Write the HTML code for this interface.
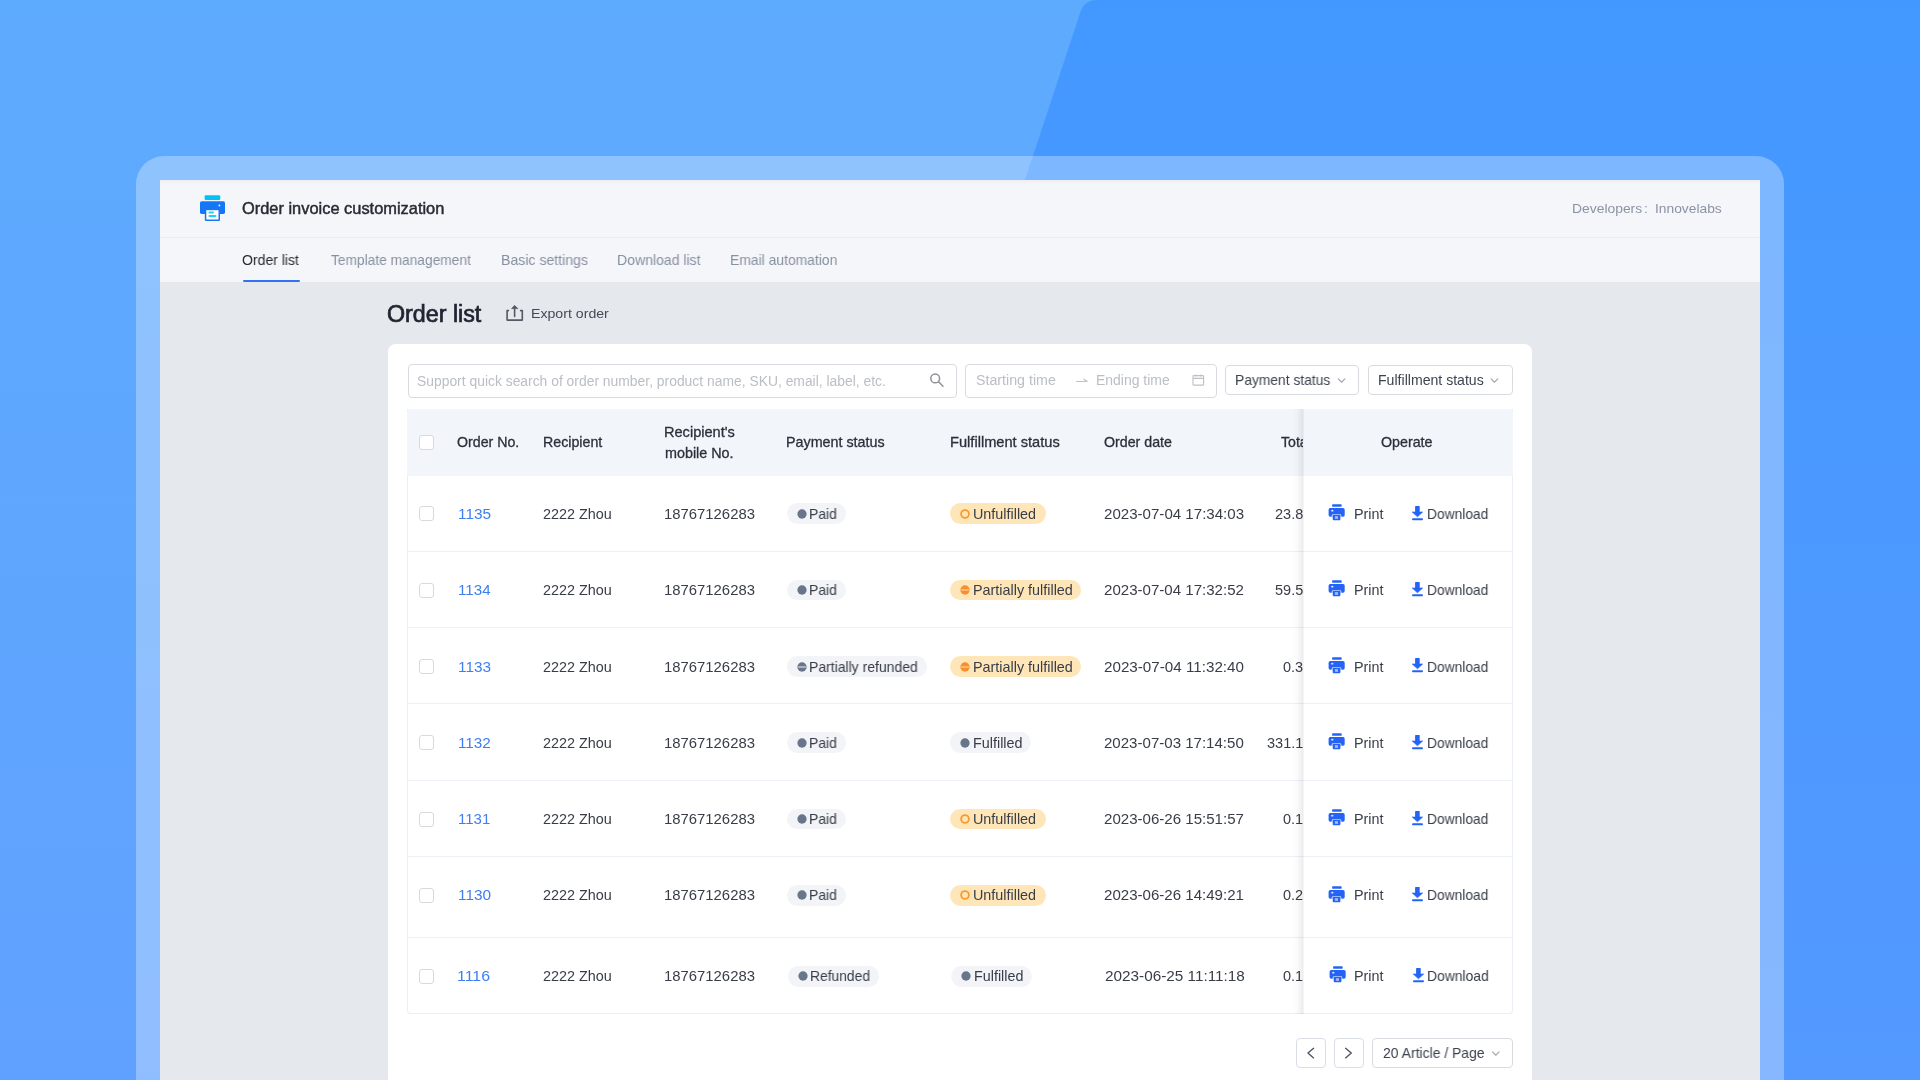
<!DOCTYPE html>
<html><head><meta charset="utf-8"><title>Order list</title>
<style>
html,body{margin:0;padding:0;width:1920px;height:1080px;overflow:hidden;background:#5DABFE;}
body{position:relative;font-family:"Liberation Sans",sans-serif;}
.r{position:absolute;}
.t{position:absolute;white-space:nowrap;will-change:transform;}
</style></head><body>
<svg class="r" style="left:0;top:0" width="1920" height="1080" viewBox="0 0 1920 1080">
<defs>
<linearGradient id="gl" x1="0" y1="0" x2="0" y2="1"><stop offset="0" stop-color="#5DABFE"/><stop offset="1" stop-color="#60A1FF"/></linearGradient>
<linearGradient id="gr" x1="0" y1="0" x2="0" y2="1"><stop offset="0" stop-color="#4398FF"/><stop offset="1" stop-color="#5399FF"/></linearGradient>
</defs>
<rect width="1920" height="1080" fill="url(#gl)"/>
<path d="M728,1080 L1080.4,12 Q1084.4,0 1097,0 L1920,0 L1920,1080 Z" fill="url(#gr)"/>
</svg>
<div class="r" style="left:136.00px;top:156.00px;width:1648.00px;height:1000.00px;border-radius:28px;background:rgba(255,255,255,0.3);"></div>
<div class="r" style="left:160.00px;top:180.00px;width:1600.00px;height:900.00px;background:#E5E8ED;"></div>
<div class="r" style="left:160.00px;top:180.00px;width:1600.00px;height:102.00px;background:#F5F6FA;"></div>
<div class="r" style="left:160.00px;top:237.00px;width:1600.00px;height:1.00px;background:#EAECF1;"></div>
<div class="r" style="left:160.00px;top:180.00px;width:1600.00px;height:4.00px;background:linear-gradient(to bottom, rgba(0,0,0,0.035), rgba(0,0,0,0));"></div>
<svg class="r" style="left:198px;top:193px" width="30" height="30" viewBox="198 193 30 30">
<rect x="204.6" y="195.2" width="15.7" height="4.8" rx="1.2" fill="#00C2F6"/>
<rect x="200" y="201.2" width="25" height="12.7" rx="1.6" fill="#1677F6"/>
<rect x="204.8" y="209.5" width="15.2" height="11.4" rx="1.2" fill="#1677F6"/>
<rect x="206.3" y="210.2" width="12.2" height="9.3" fill="#FFFFFF"/>
<rect x="208.5" y="211.6" width="5.5" height="1.9" rx="0.95" fill="#22CFF2"/>
<rect x="208.5" y="214.9" width="7.9" height="2.1" rx="1" fill="#22CFF2"/>
<circle cx="219.4" cy="205.4" r="0.9" fill="#FFFFFF"/>
</svg>
<div class="t" id="t0" style="left:241.81px;top:200px;font-size:16.20px;line-height:16.20px;color:#272B34;transform:scaleX(1.0131);transform-origin:0 0;-webkit-text-stroke:0.45px #272B34;">Order invoice customization</div>
<div class="t" id="t1" style="left:1572.48px;top:202px;font-size:13.60px;line-height:13.60px;color:#8A93A5;transform:scaleX(1.0203);transform-origin:0 0;">Developers</div>
<div class="t" id="t2" style="left:1644.10px;top:202px;font-size:13.60px;line-height:13.60px;color:#8A93A5;">:</div>
<div class="t" id="t3" style="left:1655.26px;top:202px;font-size:13.60px;line-height:13.60px;color:#8A93A5;transform:scaleX(1.0149);transform-origin:0 0;">Innovelabs</div>
<div class="t" id="t4" style="left:242.37px;top:253px;font-size:14.20px;line-height:14.20px;color:#272B34;transform:scaleX(0.9887);transform-origin:0 0;">Order list</div>
<div class="t" id="t5" style="left:331.11px;top:253px;font-size:14.20px;line-height:14.20px;color:#8790A1;transform:scaleX(0.9688);transform-origin:0 0;">Template management</div>
<div class="t" id="t6" style="left:500.86px;top:253px;font-size:14.20px;line-height:14.20px;color:#8790A1;transform:scaleX(0.9932);transform-origin:0 0;">Basic settings</div>
<div class="t" id="t7" style="left:616.91px;top:253px;font-size:14.20px;line-height:14.20px;color:#8790A1;transform:scaleX(0.9902);transform-origin:0 0;">Download list</div>
<div class="t" id="t8" style="left:729.88px;top:253px;font-size:14.20px;line-height:14.20px;color:#8790A1;transform:scaleX(0.9793);transform-origin:0 0;">Email automation</div>
<div class="r" style="left:243.00px;top:279.50px;width:57.00px;height:2.60px;background:#3470F4;border-radius:1px;"></div>
<div class="t" id="t9" style="left:387.34px;top:303px;font-size:23.00px;line-height:23.00px;color:#1F2430;transform:scaleX(1.0108);transform-origin:0 0;-webkit-text-stroke:0.7px #1F2430;">Order list</div>
<svg class="r" style="left:500px;top:300px" width="30" height="26" viewBox="500 300 30 26">
<path d="M508.4,310.6 H507.1 V320.1 H522.3 V310.6 H520.6" fill="none" stroke="#535A66" stroke-width="1.6" stroke-linejoin="round" stroke-linecap="round"/>
<path d="M514.6,316.4 V306.8" fill="none" stroke="#535A66" stroke-width="1.6" stroke-linecap="round"/>
<path d="M511.6,308.6 L514.6,305.4 L517.8,308.6 Z" fill="#535A66" stroke="#535A66" stroke-width="0.8" stroke-linejoin="round"/>
</svg>
<div class="t" id="t10" style="left:531.12px;top:307px;font-size:13.70px;line-height:13.70px;color:#434A56;transform:scaleX(1.0333);transform-origin:0 0;">Export order</div>
<div class="r" style="left:388.00px;top:344.00px;width:1143.70px;height:800.00px;background:#FFFFFF;border-radius:8px;"></div>
<div class="r" style="left:407.50px;top:363.50px;width:549.00px;height:34.00px;border:1px solid #D9DBE0;border-radius:4px;box-sizing:border-box;"></div>
<div class="t" id="t11" style="left:417.15px;top:375px;font-size:13.80px;line-height:13.80px;color:#BABEC5;transform:scaleX(1.0056);transform-origin:0 0;">Support quick search of order number, product name, SKU, email, label, etc.</div>
<svg class="r" style="left:925px;top:368px" width="25" height="24" viewBox="925 368 25 24">
<circle cx="935.2" cy="378.4" r="4.4" fill="none" stroke="#8E9196" stroke-width="1.5"/>
<path d="M938.6,381.8 L943,386.2" stroke="#8E9196" stroke-width="1.5" stroke-linecap="round"/>
</svg>
<div class="r" style="left:965.00px;top:363.50px;width:251.50px;height:34.00px;border:1px solid #D9DBE0;border-radius:4px;box-sizing:border-box;"></div>
<div class="t" id="t12" style="left:975.56px;top:374px;font-size:13.80px;line-height:13.80px;color:#BABEC5;transform:scaleX(1.0310);transform-origin:0 0;">Starting time</div>
<div class="t" id="t13" style="left:1096.26px;top:374px;font-size:13.80px;line-height:13.80px;color:#BABEC5;transform:scaleX(1.0116);transform-origin:0 0;">Ending time</div>
<svg class="r" style="left:1070px;top:368px" width="140" height="24" viewBox="1070 368 140 24">
<path d="M1076.6,381.5 H1087.2 L1083.8,379.2" fill="none" stroke="#BCC0C7" stroke-width="1.1" stroke-linecap="round" stroke-linejoin="round"/>
<rect x="1193" y="375.6" width="10.6" height="9.5" rx="0.6" fill="none" stroke="#BCC0C7" stroke-width="1.1"/>
<path d="M1193,378.4 H1203.6 M1195.8,374.6 V376.4 M1200.8,374.6 V376.4" stroke="#BCC0C7" stroke-width="1.1"/>
</svg>
<div class="r" style="left:1224.50px;top:365.30px;width:134.20px;height:30.00px;border:1px solid #D9DBE0;border-radius:4px;box-sizing:border-box;"></div>
<div class="t" id="t14" style="left:1235.27px;top:373px;font-size:14.10px;line-height:14.10px;color:#3D4450;transform:scaleX(0.9812);transform-origin:0 0;">Payment status</div>
<div class="r" style="left:1367.50px;top:365.30px;width:145.00px;height:30.00px;border:1px solid #D9DBE0;border-radius:4px;box-sizing:border-box;"></div>
<div class="t" id="t15" style="left:1378.16px;top:373px;font-size:14.10px;line-height:14.10px;color:#3D4450;transform:scaleX(0.9997);transform-origin:0 0;">Fulfillment status</div>
<svg class="r" style="left:1330px;top:370px" width="180" height="20" viewBox="1330 370 180 20">
<path d="M1338.3,378.9 L1341.6,382.2 L1344.9,378.9" fill="none" stroke="#A6AAB2" stroke-width="1.25" stroke-linecap="round" stroke-linejoin="round"/>
<path d="M1491.1,378.9 L1494.4,382.2 L1497.7,378.9" fill="none" stroke="#A6AAB2" stroke-width="1.25" stroke-linecap="round" stroke-linejoin="round"/>
</svg>
<div class="r" style="left:407.00px;top:408.70px;width:1106.00px;height:605.10px;border:1px solid #EBEEF5;border-top:none;border-radius:0 0 4px 4px;box-sizing:border-box;"></div>
<div class="r" style="left:407.00px;top:408.70px;width:1106.00px;height:67.00px;background:#F2F5FA;border-radius:4px 4px 0 0;"></div>
<div class="r" style="left:419.00px;top:434.70px;width:15.00px;height:15.00px;border:1px solid #D6D9DF;border-radius:3px;box-sizing:border-box;background:#fff;"></div>
<div class="t" id="t16" style="left:457.17px;top:435px;font-size:14.10px;line-height:14.10px;color:#2B303B;transform:scaleX(1.0058);transform-origin:0 0;-webkit-text-stroke:0.3px #2B303B;">Order No.</div>
<div class="t" id="t17" style="left:542.53px;top:435px;font-size:14.10px;line-height:14.10px;color:#2B303B;transform:scaleX(1.0080);transform-origin:0 0;-webkit-text-stroke:0.3px #2B303B;">Recipient</div>
<div class="t" id="t18" style="left:663.89px;top:425px;font-size:14.10px;line-height:14.10px;color:#2B303B;transform:scaleX(1.0337);transform-origin:0 0;-webkit-text-stroke:0.3px #2B303B;">Recipient's</div>
<div class="t" id="t19" style="left:664.76px;top:446px;font-size:14.10px;line-height:14.10px;color:#2B303B;transform:scaleX(1.0181);transform-origin:0 0;-webkit-text-stroke:0.3px #2B303B;">mobile No.</div>
<div class="t" id="t20" style="left:786.47px;top:435px;font-size:14.10px;line-height:14.10px;color:#2B303B;transform:scaleX(1.0145);transform-origin:0 0;-webkit-text-stroke:0.3px #2B303B;">Payment status</div>
<div class="t" id="t21" style="left:950.35px;top:435px;font-size:14.10px;line-height:14.10px;color:#2B303B;transform:scaleX(1.0380);transform-origin:0 0;-webkit-text-stroke:0.3px #2B303B;">Fulfillment status</div>
<div class="t" id="t22" style="left:1104.39px;top:435px;font-size:14.10px;line-height:14.10px;color:#2B303B;transform:scaleX(1.0074);transform-origin:0 0;-webkit-text-stroke:0.3px #2B303B;">Order date</div>
<div class="r" style="left:1270px;top:420px;width:32.5px;height:40px;overflow:hidden">
<div class="t" id="t23" style="left:10.50px;top:15px;font-size:14.10px;line-height:14.10px;color:#2B303B;-webkit-text-stroke:0.3px #2B303B;">Total</div>
</div>
<div class="t" id="t24" style="left:1381.36px;top:435px;font-size:14.10px;line-height:14.10px;color:#2B303B;transform:scaleX(1.0114);transform-origin:0 0;-webkit-text-stroke:0.3px #2B303B;">Operate</div>
<div class="r" style="left:408.00px;top:551.00px;width:1104.00px;height:1.00px;background:#EDF0F5;"></div>
<div class="r" style="left:408.00px;top:627.20px;width:1104.00px;height:1.00px;background:#EDF0F5;"></div>
<div class="r" style="left:408.00px;top:703.40px;width:1104.00px;height:1.00px;background:#EDF0F5;"></div>
<div class="r" style="left:408.00px;top:779.70px;width:1104.00px;height:1.00px;background:#EDF0F5;"></div>
<div class="r" style="left:408.00px;top:855.60px;width:1104.00px;height:1.00px;background:#EDF0F5;"></div>
<div class="r" style="left:408.00px;top:936.50px;width:1104.00px;height:1.00px;background:#EDF0F5;"></div>
<div class="r" style="left:419.00px;top:506.30px;width:15.00px;height:15.00px;border:1px solid #D6D9DF;border-radius:3px;box-sizing:border-box;background:#fff;"></div>
<div class="t" id="t25" style="left:457.68px;top:507px;font-size:14.40px;line-height:14.40px;color:#3D7EF2;transform:scaleX(1.0706);transform-origin:0 0;">1135</div>
<div class="t" id="t26" style="left:542.85px;top:507px;font-size:14.40px;line-height:14.40px;color:#383D48;transform:scaleX(0.9957);transform-origin:0 0;">2222 Zhou</div>
<div class="t" id="t27" style="left:664.32px;top:507px;font-size:14.40px;line-height:14.40px;color:#383D48;transform:scaleX(1.0328);transform-origin:0 0;">18767126283</div>
<div class="r" style="left:787.30px;top:503.40px;width:58.30px;height:20.80px;background:#F2F4F7;border-radius:10.4px;"></div>
<svg class="r" style="left:797.00px;top:508.80px" width="10" height="10" viewBox="0 0 10 10"><circle cx="5" cy="5" r="4.65" fill="#68758A"/></svg>
<div class="t" id="t28" style="left:808.77px;top:507px;font-size:14.20px;line-height:14.20px;color:#383D48;transform:scaleX(0.9802);transform-origin:0 0;">Paid</div>
<div class="r" style="left:950.40px;top:503.40px;width:95.30px;height:20.80px;background:#FFE6B9;border-radius:10.4px;"></div>
<svg class="r" style="left:960.10px;top:508.80px" width="10" height="10" viewBox="0 0 10 10"><circle cx="5" cy="5" r="3.9" fill="none" stroke="#FA9A2C" stroke-width="1.8"/></svg>
<div class="t" id="t29" style="left:972.68px;top:507px;font-size:14.20px;line-height:14.20px;color:#383D48;transform:scaleX(1.0119);transform-origin:0 0;">Unfulfilled</div>
<div class="t" id="t30" style="left:1104.10px;top:507px;font-size:14.40px;line-height:14.40px;color:#383D48;transform:scaleX(1.0482);transform-origin:0 0;">2023-07-04 17:34:03</div>
<div class="r" style="left:1250px;top:498.80px;width:52.5px;height:30px;overflow:hidden"><div class="t" style="right:-8.5px;top:0;font-size:14.5px;line-height:30px;color:#383D48;white-space:nowrap">23.80</div></div>
<svg class="r" style="left:1326.00px;top:502.00px" width="22" height="20" viewBox="0 0 22 20">
<rect x="6.1" y="2.2" width="9.6" height="2.6" rx="0.9" fill="#2463F6"/>
<rect x="2.6" y="6.1" width="16.1" height="8.7" rx="1.7" fill="#2463F6"/>
<rect x="5.6" y="11.9" width="9.8" height="7" rx="1.9" fill="#FFFFFF" opacity="0.72"/>
<rect x="6.7" y="12.8" width="7.7" height="5.5" rx="1" fill="#2463F6"/>
<rect x="8.9" y="14.1" width="3.1" height="2.8" fill="#FFFFFF" opacity="0.55"/>
<ellipse cx="6.3" cy="8.7" rx="1.2" ry="0.9" fill="#FFFFFF" opacity="0.85"/>
</svg>
<div class="t" id="t31" style="left:1353.64px;top:507px;font-size:14.20px;line-height:14.20px;color:#383D48;transform:scaleX(1.0113);transform-origin:0 0;">Print</div>
<svg class="r" style="left:1412.20px;top:505.60px" width="12" height="15" viewBox="0 0 12 15">
<rect x="3.1" y="0" width="4.6" height="6.5" rx="0.5" fill="#2264F6"/>
<path d="M0.2,6 H10.7 L5.45,10.8 Z" fill="#2264F6" stroke="#2264F6" stroke-width="0.6" stroke-linejoin="round"/>
<rect x="0" y="12.2" width="11" height="2.1" rx="1.05" fill="#2264F6"/>
</svg>
<div class="t" id="t32" style="left:1426.75px;top:507px;font-size:14.20px;line-height:14.20px;color:#383D48;transform:scaleX(0.9712);transform-origin:0 0;">Download</div>
<div class="r" style="left:419.00px;top:582.50px;width:15.00px;height:15.00px;border:1px solid #D6D9DF;border-radius:3px;box-sizing:border-box;background:#fff;"></div>
<div class="t" id="t33" style="left:457.72px;top:583px;font-size:14.40px;line-height:14.40px;color:#3D7EF2;transform:scaleX(1.0537);transform-origin:0 0;">1134</div>
<div class="t" id="t34" style="left:542.85px;top:583px;font-size:14.40px;line-height:14.40px;color:#383D48;transform:scaleX(0.9957);transform-origin:0 0;">2222 Zhou</div>
<div class="t" id="t35" style="left:664.32px;top:583px;font-size:14.40px;line-height:14.40px;color:#383D48;transform:scaleX(1.0328);transform-origin:0 0;">18767126283</div>
<div class="r" style="left:787.30px;top:579.60px;width:58.30px;height:20.80px;background:#F2F4F7;border-radius:10.4px;"></div>
<svg class="r" style="left:797.00px;top:585.00px" width="10" height="10" viewBox="0 0 10 10"><circle cx="5" cy="5" r="4.65" fill="#68758A"/></svg>
<div class="t" id="t36" style="left:808.77px;top:583px;font-size:14.20px;line-height:14.20px;color:#383D48;transform:scaleX(0.9802);transform-origin:0 0;">Paid</div>
<div class="r" style="left:950.40px;top:579.60px;width:131.00px;height:20.80px;background:#FFE6B9;border-radius:10.4px;"></div>
<svg class="r" style="left:960.10px;top:585.00px" width="10" height="10" viewBox="0 0 10 10"><circle cx="5" cy="5" r="4.65" fill="#FA8F2A"/><rect x="1.2" y="4.5" width="7.6" height="1.0" fill="#FFE6B9"/></svg>
<div class="t" id="t37" style="left:972.80px;top:583px;font-size:14.20px;line-height:14.20px;color:#383D48;transform:scaleX(1.0130);transform-origin:0 0;">Partially fulfilled</div>
<div class="t" id="t38" style="left:1104.10px;top:583px;font-size:14.40px;line-height:14.40px;color:#383D48;transform:scaleX(1.0470);transform-origin:0 0;">2023-07-04 17:32:52</div>
<div class="r" style="left:1250px;top:575.00px;width:52.5px;height:30px;overflow:hidden"><div class="t" style="right:-8.5px;top:0;font-size:14.5px;line-height:30px;color:#383D48;white-space:nowrap">59.50</div></div>
<svg class="r" style="left:1326.00px;top:578.20px" width="22" height="20" viewBox="0 0 22 20">
<rect x="6.1" y="2.2" width="9.6" height="2.6" rx="0.9" fill="#2463F6"/>
<rect x="2.6" y="6.1" width="16.1" height="8.7" rx="1.7" fill="#2463F6"/>
<rect x="5.6" y="11.9" width="9.8" height="7" rx="1.9" fill="#FFFFFF" opacity="0.72"/>
<rect x="6.7" y="12.8" width="7.7" height="5.5" rx="1" fill="#2463F6"/>
<rect x="8.9" y="14.1" width="3.1" height="2.8" fill="#FFFFFF" opacity="0.55"/>
<ellipse cx="6.3" cy="8.7" rx="1.2" ry="0.9" fill="#FFFFFF" opacity="0.85"/>
</svg>
<div class="t" id="t39" style="left:1353.64px;top:583px;font-size:14.20px;line-height:14.20px;color:#383D48;transform:scaleX(1.0113);transform-origin:0 0;">Print</div>
<svg class="r" style="left:1412.20px;top:581.80px" width="12" height="15" viewBox="0 0 12 15">
<rect x="3.1" y="0" width="4.6" height="6.5" rx="0.5" fill="#2264F6"/>
<path d="M0.2,6 H10.7 L5.45,10.8 Z" fill="#2264F6" stroke="#2264F6" stroke-width="0.6" stroke-linejoin="round"/>
<rect x="0" y="12.2" width="11" height="2.1" rx="1.05" fill="#2264F6"/>
</svg>
<div class="t" id="t40" style="left:1426.75px;top:583px;font-size:14.20px;line-height:14.20px;color:#383D48;transform:scaleX(0.9712);transform-origin:0 0;">Download</div>
<div class="r" style="left:419.00px;top:659.00px;width:15.00px;height:15.00px;border:1px solid #D6D9DF;border-radius:3px;box-sizing:border-box;background:#fff;"></div>
<div class="t" id="t41" style="left:457.67px;top:660px;font-size:14.40px;line-height:14.40px;color:#3D7EF2;transform:scaleX(1.0670);transform-origin:0 0;">1133</div>
<div class="t" id="t42" style="left:542.85px;top:660px;font-size:14.40px;line-height:14.40px;color:#383D48;transform:scaleX(0.9957);transform-origin:0 0;">2222 Zhou</div>
<div class="t" id="t43" style="left:664.32px;top:660px;font-size:14.40px;line-height:14.40px;color:#383D48;transform:scaleX(1.0328);transform-origin:0 0;">18767126283</div>
<div class="r" style="left:787.30px;top:656.10px;width:140.00px;height:20.80px;background:#F2F4F7;border-radius:10.4px;"></div>
<svg class="r" style="left:797.00px;top:661.50px" width="10" height="10" viewBox="0 0 10 10"><circle cx="5" cy="5" r="4.65" fill="#68758A"/><rect x="1.2" y="4.5" width="7.6" height="1.0" fill="#F2F4F7"/></svg>
<div class="t" id="t44" style="left:808.88px;top:660px;font-size:14.20px;line-height:14.20px;color:#383D48;transform:scaleX(0.9849);transform-origin:0 0;">Partially refunded</div>
<div class="r" style="left:950.40px;top:656.10px;width:131.00px;height:20.80px;background:#FFE6B9;border-radius:10.4px;"></div>
<svg class="r" style="left:960.10px;top:661.50px" width="10" height="10" viewBox="0 0 10 10"><circle cx="5" cy="5" r="4.65" fill="#FA8F2A"/><rect x="1.2" y="4.5" width="7.6" height="1.0" fill="#FFE6B9"/></svg>
<div class="t" id="t45" style="left:972.80px;top:660px;font-size:14.20px;line-height:14.20px;color:#383D48;transform:scaleX(1.0130);transform-origin:0 0;">Partially fulfilled</div>
<div class="t" id="t46" style="left:1104.07px;top:660px;font-size:14.40px;line-height:14.40px;color:#383D48;transform:scaleX(1.0560);transform-origin:0 0;">2023-07-04 11:32:40</div>
<div class="r" style="left:1250px;top:651.50px;width:52.5px;height:30px;overflow:hidden"><div class="t" style="right:-8.5px;top:0;font-size:14.5px;line-height:30px;color:#383D48;white-space:nowrap">0.30</div></div>
<svg class="r" style="left:1326.00px;top:654.70px" width="22" height="20" viewBox="0 0 22 20">
<rect x="6.1" y="2.2" width="9.6" height="2.6" rx="0.9" fill="#2463F6"/>
<rect x="2.6" y="6.1" width="16.1" height="8.7" rx="1.7" fill="#2463F6"/>
<rect x="5.6" y="11.9" width="9.8" height="7" rx="1.9" fill="#FFFFFF" opacity="0.72"/>
<rect x="6.7" y="12.8" width="7.7" height="5.5" rx="1" fill="#2463F6"/>
<rect x="8.9" y="14.1" width="3.1" height="2.8" fill="#FFFFFF" opacity="0.55"/>
<ellipse cx="6.3" cy="8.7" rx="1.2" ry="0.9" fill="#FFFFFF" opacity="0.85"/>
</svg>
<div class="t" id="t47" style="left:1353.64px;top:660px;font-size:14.20px;line-height:14.20px;color:#383D48;transform:scaleX(1.0113);transform-origin:0 0;">Print</div>
<svg class="r" style="left:1412.20px;top:658.30px" width="12" height="15" viewBox="0 0 12 15">
<rect x="3.1" y="0" width="4.6" height="6.5" rx="0.5" fill="#2264F6"/>
<path d="M0.2,6 H10.7 L5.45,10.8 Z" fill="#2264F6" stroke="#2264F6" stroke-width="0.6" stroke-linejoin="round"/>
<rect x="0" y="12.2" width="11" height="2.1" rx="1.05" fill="#2264F6"/>
</svg>
<div class="t" id="t48" style="left:1426.75px;top:660px;font-size:14.20px;line-height:14.20px;color:#383D48;transform:scaleX(0.9712);transform-origin:0 0;">Download</div>
<div class="r" style="left:419.00px;top:735.30px;width:15.00px;height:15.00px;border:1px solid #D6D9DF;border-radius:3px;box-sizing:border-box;background:#fff;"></div>
<div class="t" id="t49" style="left:457.71px;top:736px;font-size:14.40px;line-height:14.40px;color:#3D7EF2;transform:scaleX(1.0617);transform-origin:0 0;">1132</div>
<div class="t" id="t50" style="left:542.85px;top:736px;font-size:14.40px;line-height:14.40px;color:#383D48;transform:scaleX(0.9957);transform-origin:0 0;">2222 Zhou</div>
<div class="t" id="t51" style="left:664.32px;top:736px;font-size:14.40px;line-height:14.40px;color:#383D48;transform:scaleX(1.0328);transform-origin:0 0;">18767126283</div>
<div class="r" style="left:787.30px;top:732.40px;width:58.30px;height:20.80px;background:#F2F4F7;border-radius:10.4px;"></div>
<svg class="r" style="left:797.00px;top:737.80px" width="10" height="10" viewBox="0 0 10 10"><circle cx="5" cy="5" r="4.65" fill="#68758A"/></svg>
<div class="t" id="t52" style="left:808.77px;top:736px;font-size:14.20px;line-height:14.20px;color:#383D48;transform:scaleX(0.9802);transform-origin:0 0;">Paid</div>
<div class="r" style="left:950.40px;top:732.40px;width:80.50px;height:20.80px;background:#F2F4F7;border-radius:10.4px;"></div>
<svg class="r" style="left:960.10px;top:737.80px" width="10" height="10" viewBox="0 0 10 10"><circle cx="5" cy="5" r="4.65" fill="#68758A"/></svg>
<div class="t" id="t53" style="left:972.92px;top:736px;font-size:14.20px;line-height:14.20px;color:#383D48;transform:scaleX(1.0128);transform-origin:0 0;">Fulfilled</div>
<div class="t" id="t54" style="left:1104.12px;top:736px;font-size:14.40px;line-height:14.40px;color:#383D48;transform:scaleX(1.0462);transform-origin:0 0;">2023-07-03 17:14:50</div>
<div class="r" style="left:1250px;top:727.80px;width:52.5px;height:30px;overflow:hidden"><div class="t" style="right:-8.5px;top:0;font-size:14.5px;line-height:30px;color:#383D48;white-space:nowrap">331.10</div></div>
<svg class="r" style="left:1326.00px;top:731.00px" width="22" height="20" viewBox="0 0 22 20">
<rect x="6.1" y="2.2" width="9.6" height="2.6" rx="0.9" fill="#2463F6"/>
<rect x="2.6" y="6.1" width="16.1" height="8.7" rx="1.7" fill="#2463F6"/>
<rect x="5.6" y="11.9" width="9.8" height="7" rx="1.9" fill="#FFFFFF" opacity="0.72"/>
<rect x="6.7" y="12.8" width="7.7" height="5.5" rx="1" fill="#2463F6"/>
<rect x="8.9" y="14.1" width="3.1" height="2.8" fill="#FFFFFF" opacity="0.55"/>
<ellipse cx="6.3" cy="8.7" rx="1.2" ry="0.9" fill="#FFFFFF" opacity="0.85"/>
</svg>
<div class="t" id="t55" style="left:1353.64px;top:736px;font-size:14.20px;line-height:14.20px;color:#383D48;transform:scaleX(1.0113);transform-origin:0 0;">Print</div>
<svg class="r" style="left:1412.20px;top:734.60px" width="12" height="15" viewBox="0 0 12 15">
<rect x="3.1" y="0" width="4.6" height="6.5" rx="0.5" fill="#2264F6"/>
<path d="M0.2,6 H10.7 L5.45,10.8 Z" fill="#2264F6" stroke="#2264F6" stroke-width="0.6" stroke-linejoin="round"/>
<rect x="0" y="12.2" width="11" height="2.1" rx="1.05" fill="#2264F6"/>
</svg>
<div class="t" id="t56" style="left:1426.75px;top:736px;font-size:14.20px;line-height:14.20px;color:#383D48;transform:scaleX(0.9712);transform-origin:0 0;">Download</div>
<div class="r" style="left:419.00px;top:811.50px;width:15.00px;height:15.00px;border:1px solid #D6D9DF;border-radius:3px;box-sizing:border-box;background:#fff;"></div>
<div class="t" id="t57" style="left:457.77px;top:812px;font-size:14.40px;line-height:14.40px;color:#3D7EF2;transform:scaleX(1.0424);transform-origin:0 0;">1131</div>
<div class="t" id="t58" style="left:542.85px;top:812px;font-size:14.40px;line-height:14.40px;color:#383D48;transform:scaleX(0.9957);transform-origin:0 0;">2222 Zhou</div>
<div class="t" id="t59" style="left:664.32px;top:812px;font-size:14.40px;line-height:14.40px;color:#383D48;transform:scaleX(1.0328);transform-origin:0 0;">18767126283</div>
<div class="r" style="left:787.30px;top:808.60px;width:58.30px;height:20.80px;background:#F2F4F7;border-radius:10.4px;"></div>
<svg class="r" style="left:797.00px;top:814.00px" width="10" height="10" viewBox="0 0 10 10"><circle cx="5" cy="5" r="4.65" fill="#68758A"/></svg>
<div class="t" id="t60" style="left:808.77px;top:812px;font-size:14.20px;line-height:14.20px;color:#383D48;transform:scaleX(0.9802);transform-origin:0 0;">Paid</div>
<div class="r" style="left:950.40px;top:808.60px;width:95.30px;height:20.80px;background:#FFE6B9;border-radius:10.4px;"></div>
<svg class="r" style="left:960.10px;top:814.00px" width="10" height="10" viewBox="0 0 10 10"><circle cx="5" cy="5" r="3.9" fill="none" stroke="#FA9A2C" stroke-width="1.8"/></svg>
<div class="t" id="t61" style="left:972.68px;top:812px;font-size:14.20px;line-height:14.20px;color:#383D48;transform:scaleX(1.0119);transform-origin:0 0;">Unfulfilled</div>
<div class="t" id="t62" style="left:1104.10px;top:812px;font-size:14.40px;line-height:14.40px;color:#383D48;transform:scaleX(1.0470);transform-origin:0 0;">2023-06-26 15:51:57</div>
<div class="r" style="left:1250px;top:804.00px;width:52.5px;height:30px;overflow:hidden"><div class="t" style="right:-8.5px;top:0;font-size:14.5px;line-height:30px;color:#383D48;white-space:nowrap">0.10</div></div>
<svg class="r" style="left:1326.00px;top:807.20px" width="22" height="20" viewBox="0 0 22 20">
<rect x="6.1" y="2.2" width="9.6" height="2.6" rx="0.9" fill="#2463F6"/>
<rect x="2.6" y="6.1" width="16.1" height="8.7" rx="1.7" fill="#2463F6"/>
<rect x="5.6" y="11.9" width="9.8" height="7" rx="1.9" fill="#FFFFFF" opacity="0.72"/>
<rect x="6.7" y="12.8" width="7.7" height="5.5" rx="1" fill="#2463F6"/>
<rect x="8.9" y="14.1" width="3.1" height="2.8" fill="#FFFFFF" opacity="0.55"/>
<ellipse cx="6.3" cy="8.7" rx="1.2" ry="0.9" fill="#FFFFFF" opacity="0.85"/>
</svg>
<div class="t" id="t63" style="left:1353.64px;top:812px;font-size:14.20px;line-height:14.20px;color:#383D48;transform:scaleX(1.0113);transform-origin:0 0;">Print</div>
<svg class="r" style="left:1412.20px;top:810.80px" width="12" height="15" viewBox="0 0 12 15">
<rect x="3.1" y="0" width="4.6" height="6.5" rx="0.5" fill="#2264F6"/>
<path d="M0.2,6 H10.7 L5.45,10.8 Z" fill="#2264F6" stroke="#2264F6" stroke-width="0.6" stroke-linejoin="round"/>
<rect x="0" y="12.2" width="11" height="2.1" rx="1.05" fill="#2264F6"/>
</svg>
<div class="t" id="t64" style="left:1426.75px;top:812px;font-size:14.20px;line-height:14.20px;color:#383D48;transform:scaleX(0.9712);transform-origin:0 0;">Download</div>
<div class="r" style="left:419.00px;top:887.80px;width:15.00px;height:15.00px;border:1px solid #D6D9DF;border-radius:3px;box-sizing:border-box;background:#fff;"></div>
<div class="t" id="t65" style="left:457.66px;top:888px;font-size:14.40px;line-height:14.40px;color:#3D7EF2;transform:scaleX(1.0670);transform-origin:0 0;">1130</div>
<div class="t" id="t66" style="left:542.85px;top:888px;font-size:14.40px;line-height:14.40px;color:#383D48;transform:scaleX(0.9957);transform-origin:0 0;">2222 Zhou</div>
<div class="t" id="t67" style="left:664.32px;top:888px;font-size:14.40px;line-height:14.40px;color:#383D48;transform:scaleX(1.0328);transform-origin:0 0;">18767126283</div>
<div class="r" style="left:787.30px;top:884.90px;width:58.30px;height:20.80px;background:#F2F4F7;border-radius:10.4px;"></div>
<svg class="r" style="left:797.00px;top:890.30px" width="10" height="10" viewBox="0 0 10 10"><circle cx="5" cy="5" r="4.65" fill="#68758A"/></svg>
<div class="t" id="t68" style="left:808.77px;top:888px;font-size:14.20px;line-height:14.20px;color:#383D48;transform:scaleX(0.9802);transform-origin:0 0;">Paid</div>
<div class="r" style="left:950.40px;top:884.90px;width:95.30px;height:20.80px;background:#FFE6B9;border-radius:10.4px;"></div>
<svg class="r" style="left:960.10px;top:890.30px" width="10" height="10" viewBox="0 0 10 10"><circle cx="5" cy="5" r="3.9" fill="none" stroke="#FA9A2C" stroke-width="1.8"/></svg>
<div class="t" id="t69" style="left:972.68px;top:888px;font-size:14.20px;line-height:14.20px;color:#383D48;transform:scaleX(1.0119);transform-origin:0 0;">Unfulfilled</div>
<div class="t" id="t70" style="left:1104.10px;top:888px;font-size:14.40px;line-height:14.40px;color:#383D48;transform:scaleX(1.0471);transform-origin:0 0;">2023-06-26 14:49:21</div>
<div class="r" style="left:1250px;top:880.30px;width:52.5px;height:30px;overflow:hidden"><div class="t" style="right:-8.5px;top:0;font-size:14.5px;line-height:30px;color:#383D48;white-space:nowrap">0.20</div></div>
<svg class="r" style="left:1326.00px;top:883.50px" width="22" height="20" viewBox="0 0 22 20">
<rect x="6.1" y="2.2" width="9.6" height="2.6" rx="0.9" fill="#2463F6"/>
<rect x="2.6" y="6.1" width="16.1" height="8.7" rx="1.7" fill="#2463F6"/>
<rect x="5.6" y="11.9" width="9.8" height="7" rx="1.9" fill="#FFFFFF" opacity="0.72"/>
<rect x="6.7" y="12.8" width="7.7" height="5.5" rx="1" fill="#2463F6"/>
<rect x="8.9" y="14.1" width="3.1" height="2.8" fill="#FFFFFF" opacity="0.55"/>
<ellipse cx="6.3" cy="8.7" rx="1.2" ry="0.9" fill="#FFFFFF" opacity="0.85"/>
</svg>
<div class="t" id="t71" style="left:1353.64px;top:888px;font-size:14.20px;line-height:14.20px;color:#383D48;transform:scaleX(1.0113);transform-origin:0 0;">Print</div>
<svg class="r" style="left:1412.20px;top:887.10px" width="12" height="15" viewBox="0 0 12 15">
<rect x="3.1" y="0" width="4.6" height="6.5" rx="0.5" fill="#2264F6"/>
<path d="M0.2,6 H10.7 L5.45,10.8 Z" fill="#2264F6" stroke="#2264F6" stroke-width="0.6" stroke-linejoin="round"/>
<rect x="0" y="12.2" width="11" height="2.1" rx="1.05" fill="#2264F6"/>
</svg>
<div class="t" id="t72" style="left:1426.75px;top:888px;font-size:14.20px;line-height:14.20px;color:#383D48;transform:scaleX(0.9712);transform-origin:0 0;">Download</div>
<div class="r" style="left:419.00px;top:968.70px;width:15.00px;height:15.00px;border:1px solid #D6D9DF;border-radius:3px;box-sizing:border-box;background:#fff;"></div>
<div class="t" id="t73" style="left:457.44px;top:969px;font-size:14.40px;line-height:14.40px;color:#3D7EF2;transform:scaleX(1.1062);transform-origin:0 0;">1116</div>
<div class="t" id="t74" style="left:542.85px;top:969px;font-size:14.40px;line-height:14.40px;color:#383D48;transform:scaleX(0.9957);transform-origin:0 0;">2222 Zhou</div>
<div class="t" id="t75" style="left:664.32px;top:969px;font-size:14.40px;line-height:14.40px;color:#383D48;transform:scaleX(1.0328);transform-origin:0 0;">18767126283</div>
<div class="r" style="left:788.10px;top:965.80px;width:91.30px;height:20.80px;background:#F2F4F7;border-radius:10.4px;"></div>
<svg class="r" style="left:797.80px;top:971.20px" width="10" height="10" viewBox="0 0 10 10"><circle cx="5" cy="5" r="4.65" fill="#68758A"/></svg>
<div class="t" id="t76" style="left:809.72px;top:969px;font-size:14.20px;line-height:14.20px;color:#383D48;transform:scaleX(0.9746);transform-origin:0 0;">Refunded</div>
<div class="r" style="left:951.20px;top:965.80px;width:80.50px;height:20.80px;background:#F2F4F7;border-radius:10.4px;"></div>
<svg class="r" style="left:960.90px;top:971.20px" width="10" height="10" viewBox="0 0 10 10"><circle cx="5" cy="5" r="4.65" fill="#68758A"/></svg>
<div class="t" id="t77" style="left:973.99px;top:969px;font-size:14.20px;line-height:14.20px;color:#383D48;transform:scaleX(1.0107);transform-origin:0 0;">Fulfilled</div>
<div class="t" id="t78" style="left:1104.50px;top:969px;font-size:14.40px;line-height:14.40px;color:#383D48;transform:scaleX(1.0638);transform-origin:0 0;">2023-06-25 11:11:18</div>
<div class="r" style="left:1250px;top:961.20px;width:52.5px;height:30px;overflow:hidden"><div class="t" style="right:-8.5px;top:0;font-size:14.5px;line-height:30px;color:#383D48;white-space:nowrap">0.10</div></div>
<svg class="r" style="left:1326.80px;top:964.40px" width="22" height="20" viewBox="0 0 22 20">
<rect x="6.1" y="2.2" width="9.6" height="2.6" rx="0.9" fill="#2463F6"/>
<rect x="2.6" y="6.1" width="16.1" height="8.7" rx="1.7" fill="#2463F6"/>
<rect x="5.6" y="11.9" width="9.8" height="7" rx="1.9" fill="#FFFFFF" opacity="0.72"/>
<rect x="6.7" y="12.8" width="7.7" height="5.5" rx="1" fill="#2463F6"/>
<rect x="8.9" y="14.1" width="3.1" height="2.8" fill="#FFFFFF" opacity="0.55"/>
<ellipse cx="6.3" cy="8.7" rx="1.2" ry="0.9" fill="#FFFFFF" opacity="0.85"/>
</svg>
<div class="t" id="t79" style="left:1354.08px;top:969px;font-size:14.20px;line-height:14.20px;color:#383D48;transform:scaleX(1.0126);transform-origin:0 0;">Print</div>
<svg class="r" style="left:1413.00px;top:968.00px" width="12" height="15" viewBox="0 0 12 15">
<rect x="3.1" y="0" width="4.6" height="6.5" rx="0.5" fill="#2264F6"/>
<path d="M0.2,6 H10.7 L5.45,10.8 Z" fill="#2264F6" stroke="#2264F6" stroke-width="0.6" stroke-linejoin="round"/>
<rect x="0" y="12.2" width="11" height="2.1" rx="1.05" fill="#2264F6"/>
</svg>
<div class="t" id="t80" style="left:1427.16px;top:969px;font-size:14.20px;line-height:14.20px;color:#383D48;transform:scaleX(0.9779);transform-origin:0 0;">Download</div>
<div class="r" style="left:1292.00px;top:408.70px;width:10.50px;height:605.10px;background:linear-gradient(to right, rgba(0,0,0,0), rgba(0,0,0,0.02) 50%, rgba(0,0,0,0.075));"></div>
<div class="r" style="left:1302.50px;top:408.70px;width:0.80px;height:605.10px;background:rgba(0,0,0,0.04);"></div>
<div class="r" style="left:1295.60px;top:1038.40px;width:30.00px;height:29.40px;border:1px solid #D9DDE6;border-radius:4px;box-sizing:border-box;"></div>
<div class="r" style="left:1333.70px;top:1038.40px;width:30.00px;height:29.40px;border:1px solid #D9DDE6;border-radius:4px;box-sizing:border-box;"></div>
<svg class="r" style="left:1295px;top:1038px" width="70" height="30" viewBox="1295 1038 70 30">
<path d="M1313.6,1048.3 L1307.9,1053.1 L1313.6,1057.9" fill="none" stroke="#4A5260" stroke-width="1.3" stroke-linecap="round" stroke-linejoin="round"/>
<path d="M1345.6,1048.3 L1351.3,1053.1 L1345.6,1057.9" fill="none" stroke="#4A5260" stroke-width="1.3" stroke-linecap="round" stroke-linejoin="round"/>
</svg>
<div class="r" style="left:1371.90px;top:1038.40px;width:141.40px;height:29.40px;border:1px solid #D9DBE0;border-radius:4px;box-sizing:border-box;"></div>
<div class="t" id="t81" style="left:1382.54px;top:1046px;font-size:14.10px;line-height:14.10px;color:#3D4450;transform:scaleX(0.9899);transform-origin:0 0;">20 Article / Page</div>
<svg class="r" style="left:1488px;top:1045px" width="16" height="16" viewBox="1488 1045 16 16">
<path d="M1492.5,1051.9 L1495.8,1055.2 L1499.1,1051.9" fill="none" stroke="#A6AAB2" stroke-width="1.25" stroke-linecap="round" stroke-linejoin="round"/>
</svg>
</body></html>
